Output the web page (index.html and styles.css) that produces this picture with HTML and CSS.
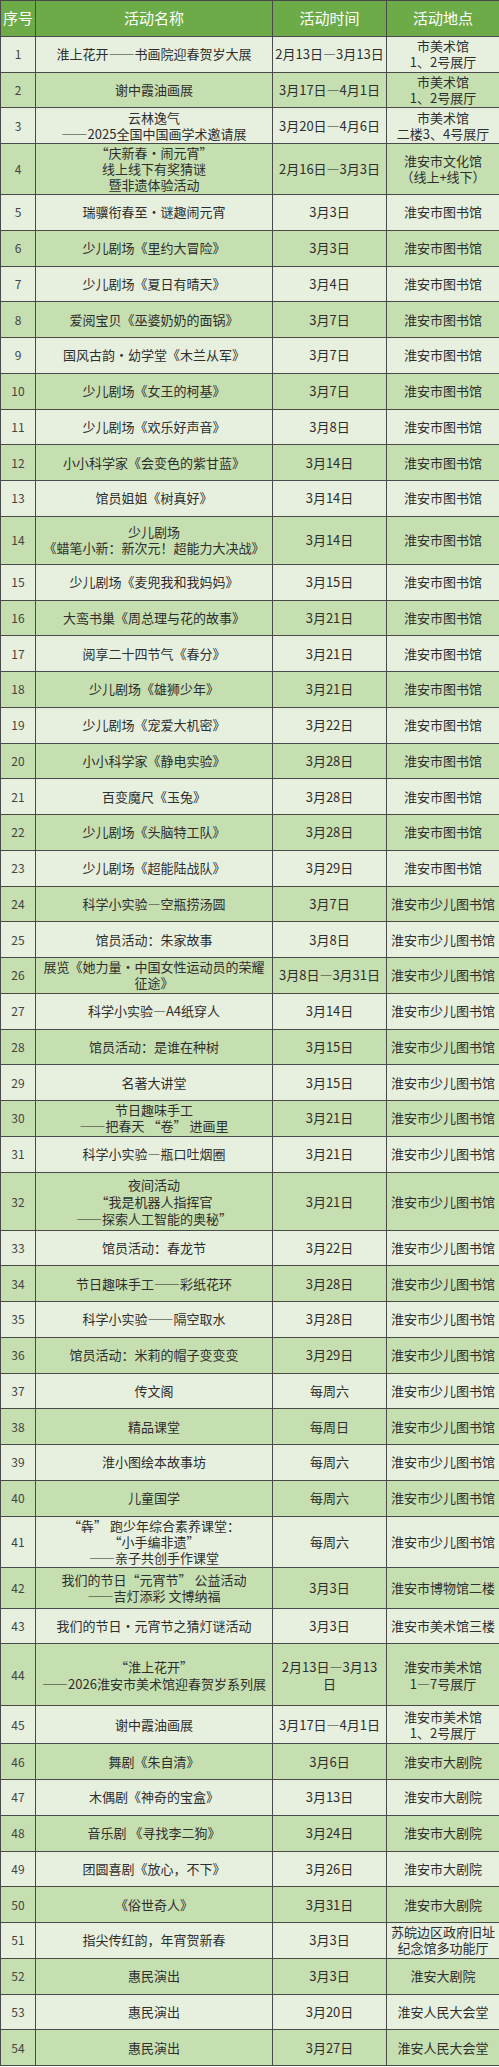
FILE: index.html
```html
<!DOCTYPE html>
<html lang="zh-CN">
<head>
<meta charset="utf-8">
<title>活动表</title>
<link rel="stylesheet" href="styles.css">
</head>
<body>
<table class="schedule">
<colgroup>
<col class="c-no"><col class="c-name"><col class="c-time"><col class="c-place">
</colgroup>
<thead>
<tr class="head"><th>序号</th><th>活动名称</th><th>活动时间</th><th>活动地点</th></tr>
</thead>
<tbody>
<tr><td class="no">1</td><td>淮上花开——书画院迎春贺岁大展</td><td>2月13日—3月13日</td><td>市美术馆<br>1、2号展厅</td></tr>
<tr><td class="no">2</td><td>谢中霞油画展</td><td>3月17日—4月1日</td><td>市美术馆<br>1、2号展厅</td></tr>
<tr><td class="no">3</td><td>云林逸气<br>——2025全国中国画学术邀请展</td><td>3月20日—4月6日</td><td>市美术馆<br>二楼3、4号展厅</td></tr>
<tr class="r51"><td class="no">4</td><td>“庆新春·闹元宵”<br>线上线下有奖猜谜<br>暨非遗体验活动</td><td>2月16日—3月3日</td><td>淮安市文化馆<br>（线上+线下）</td></tr>
<tr><td class="no">5</td><td>瑞骥衔春至·谜趣闹元宵</td><td>3月3日</td><td>淮安市图书馆</td></tr>
<tr><td class="no">6</td><td>少儿剧场《里约大冒险》</td><td>3月3日</td><td>淮安市图书馆</td></tr>
<tr><td class="no">7</td><td>少儿剧场《夏日有晴天》</td><td>3月4日</td><td>淮安市图书馆</td></tr>
<tr><td class="no">8</td><td>爱阅宝贝《巫婆奶奶的面锅》</td><td>3月7日</td><td>淮安市图书馆</td></tr>
<tr><td class="no">9</td><td>国风古韵·幼学堂《木兰从军》</td><td>3月7日</td><td>淮安市图书馆</td></tr>
<tr><td class="no">10</td><td>少儿剧场《女王的柯基》</td><td>3月7日</td><td>淮安市图书馆</td></tr>
<tr><td class="no">11</td><td>少儿剧场《欢乐好声音》</td><td>3月8日</td><td>淮安市图书馆</td></tr>
<tr><td class="no">12</td><td>小小科学家《会变色的紫甘蓝》</td><td>3月14日</td><td>淮安市图书馆</td></tr>
<tr><td class="no">13</td><td>馆员姐姐《树真好》</td><td>3月14日</td><td>淮安市图书馆</td></tr>
<tr class="r48"><td class="no">14</td><td>少儿剧场<br>《蜡笔小新：新次元！超能力大决战》</td><td>3月14日</td><td>淮安市图书馆</td></tr>
<tr><td class="no">15</td><td>少儿剧场《麦兜我和我妈妈》</td><td>3月15日</td><td>淮安市图书馆</td></tr>
<tr><td class="no">16</td><td>大鸾书巢《周总理与花的故事》</td><td>3月21日</td><td>淮安市图书馆</td></tr>
<tr><td class="no">17</td><td>阅享二十四节气《春分》</td><td>3月21日</td><td>淮安市图书馆</td></tr>
<tr><td class="no">18</td><td>少儿剧场《雄狮少年》</td><td>3月21日</td><td>淮安市图书馆</td></tr>
<tr><td class="no">19</td><td>少儿剧场《宠爱大机密》</td><td>3月22日</td><td>淮安市图书馆</td></tr>
<tr><td class="no">20</td><td>小小科学家《静电实验》</td><td>3月28日</td><td>淮安市图书馆</td></tr>
<tr><td class="no">21</td><td>百变魔尺《玉兔》</td><td>3月28日</td><td>淮安市图书馆</td></tr>
<tr><td class="no">22</td><td>少儿剧场《头脑特工队》</td><td>3月28日</td><td>淮安市图书馆</td></tr>
<tr><td class="no">23</td><td>少儿剧场《超能陆战队》</td><td>3月29日</td><td>淮安市图书馆</td></tr>
<tr><td class="no">24</td><td>科学小实验—空瓶捞汤圆</td><td>3月7日</td><td>淮安市少儿图书馆</td></tr>
<tr><td class="no">25</td><td>馆员活动：朱家故事</td><td>3月8日</td><td>淮安市少儿图书馆</td></tr>
<tr><td class="no">26</td><td>展览《她力量·中国女性运动员的荣耀<br>征途》</td><td>3月8日—3月31日</td><td>淮安市少儿图书馆</td></tr>
<tr><td class="no">27</td><td>科学小实验—A4纸穿人</td><td>3月14日</td><td>淮安市少儿图书馆</td></tr>
<tr><td class="no">28</td><td>馆员活动：是谁在种树</td><td>3月15日</td><td>淮安市少儿图书馆</td></tr>
<tr><td class="no">29</td><td>名著大讲堂</td><td>3月15日</td><td>淮安市少儿图书馆</td></tr>
<tr><td class="no">30</td><td>节日趣味手工<br>——把春天 “卷” 进画里</td><td>3月21日</td><td>淮安市少儿图书馆</td></tr>
<tr><td class="no">31</td><td>科学小实验—瓶口吐烟圈</td><td>3月21日</td><td>淮安市少儿图书馆</td></tr>
<tr class="r58"><td class="no">32</td><td>夜间活动<br>“我是机器人指挥官<br>——探索人工智能的奥秘”</td><td>3月21日</td><td>淮安市少儿图书馆</td></tr>
<tr><td class="no">33</td><td>馆员活动：春龙节</td><td>3月22日</td><td>淮安市少儿图书馆</td></tr>
<tr><td class="no">34</td><td>节日趣味手工——彩纸花环</td><td>3月28日</td><td>淮安市少儿图书馆</td></tr>
<tr><td class="no">35</td><td>科学小实验——隔空取水</td><td>3月28日</td><td>淮安市少儿图书馆</td></tr>
<tr><td class="no">36</td><td>馆员活动：米莉的帽子变变变</td><td>3月29日</td><td>淮安市少儿图书馆</td></tr>
<tr><td class="no">37</td><td>传文阁</td><td>每周六</td><td>淮安市少儿图书馆</td></tr>
<tr><td class="no">38</td><td>精品课堂</td><td>每周日</td><td>淮安市少儿图书馆</td></tr>
<tr><td class="no">39</td><td>淮小图绘本故事坊</td><td>每周六</td><td>淮安市少儿图书馆</td></tr>
<tr><td class="no">40</td><td>儿童国学</td><td>每周六</td><td>淮安市少儿图书馆</td></tr>
<tr class="r51"><td class="no">41</td><td>“犇” 跑少年综合素养课堂：<br>“小手编非遗”<br>——亲子共创手作课堂</td><td>每周六</td><td>淮安市少儿图书馆</td></tr>
<tr class="r41"><td class="no">42</td><td>我们的节日“元宵节” 公益活动<br>——吉灯添彩 文博纳福</td><td>3月3日</td><td>淮安市博物馆二楼</td></tr>
<tr><td class="no">43</td><td>我们的节日·元宵节之猜灯谜活动</td><td>3月3日</td><td>淮安市美术馆三楼</td></tr>
<tr class="r62"><td class="no">44</td><td>“淮上花开”<br>——2026淮安市美术馆迎春贺岁系列展</td><td>2月13日—3月13<br>日</td><td>淮安市美术馆<br>1—7号展厅</td></tr>
<tr class="r38"><td class="no">45</td><td>谢中霞油画展</td><td>3月17日—4月1日</td><td>淮安市美术馆<br>1、2号展厅</td></tr>
<tr><td class="no">46</td><td>舞剧《朱自清》</td><td>3月6日</td><td>淮安市大剧院</td></tr>
<tr><td class="no">47</td><td>木偶剧《神奇的宝盒》</td><td>3月13日</td><td>淮安市大剧院</td></tr>
<tr><td class="no">48</td><td>音乐剧 《寻找李二狗》</td><td>3月24日</td><td>淮安市大剧院</td></tr>
<tr><td class="no">49</td><td>团圆喜剧《放心，不下》</td><td>3月26日</td><td>淮安市大剧院</td></tr>
<tr><td class="no">50</td><td>《俗世奇人》</td><td>3月31日</td><td>淮安市大剧院</td></tr>
<tr><td class="no">51</td><td>指尖传红韵，年宵贺新春</td><td>3月3日</td><td>苏皖边区政府旧址<br>纪念馆多功能厅</td></tr>
<tr><td class="no">52</td><td>惠民演出</td><td>3月3日</td><td>淮安大剧院</td></tr>
<tr><td class="no">53</td><td>惠民演出</td><td>3月20日</td><td>淮安人民大会堂</td></tr>
<tr><td class="no">54</td><td>惠民演出</td><td>3月27日</td><td>淮安人民大会堂</td></tr>
</tbody>
</table>
</body>
</html>
```
FILE: styles.css
```css
html, body {
  margin: 0;
  padding: 0;
  background: #ffffff;
}

.schedule {
  width: 499px;
  table-layout: fixed;
  border-collapse: collapse;
  font-family: "Noto Sans CJK SC", "Noto Sans", sans-serif;
  font-size: 13px;
  line-height: 16px;
  color: #2e2e2e;
}

.c-no { width: 35px; }
.c-name { width: 237px; }
.c-time { width: 114px; }
.c-place { width: 113px; }

.schedule th,
.schedule td {
  border: 1px solid #4a4a4a;
  padding: 0;
  text-align: center;
  vertical-align: middle;
  white-space: nowrap;
  overflow: hidden;
}

.schedule tr { height: 35.75px; }

.head { height: 36px; }
.head th {
  background: #6dab48;
  color: #ffffff;
  font-weight: normal;
  font-size: 15px;
}

.schedule tbody tr:nth-child(odd) td { background: #e7f0de; }
.schedule tbody tr:nth-child(even) td { background: #c6dfb1; }

.schedule td.no {
  color: #444444;
  font-size: 12px;
}

.r38 { height: 38px !important; }
.r41 { height: 41px !important; }
.r48 { height: 48px !important; }
.r51 { height: 51px !important; }
.r58 { height: 58px !important; }
.r62 { height: 62px !important; }
.r58 td, .r62 td { line-height: 17px; }
```
